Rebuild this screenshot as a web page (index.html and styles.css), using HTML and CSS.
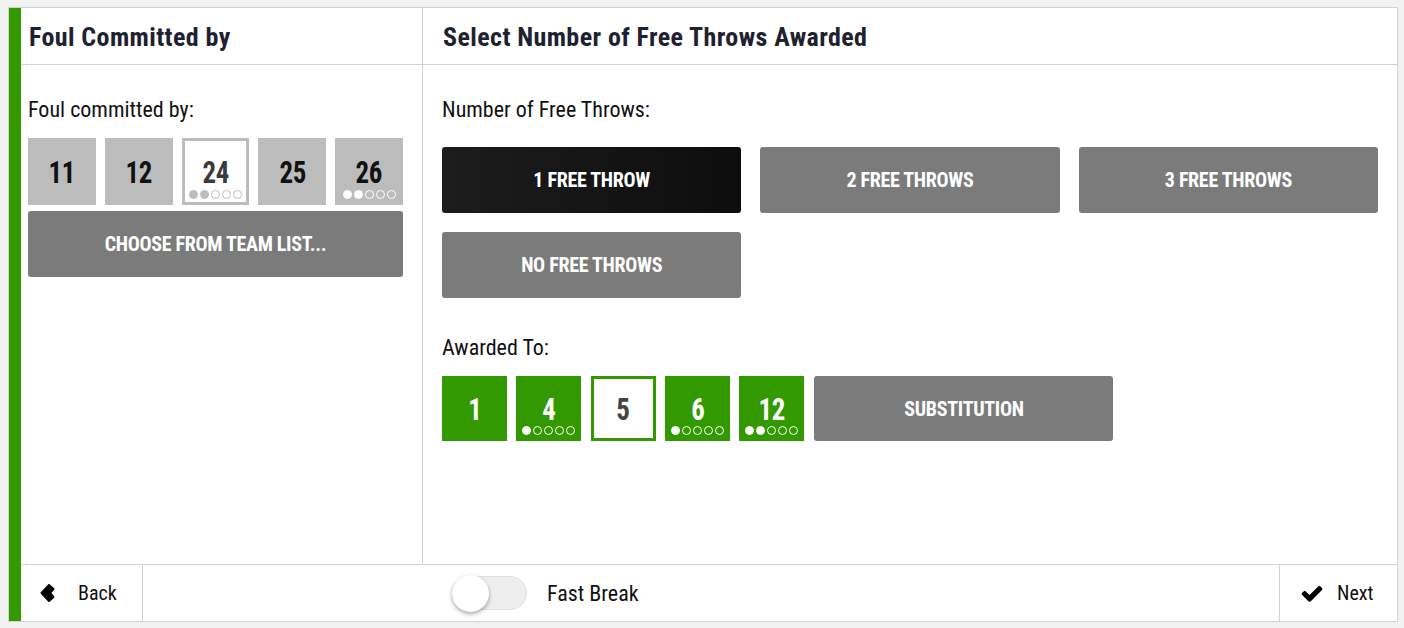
FILE: index.html
```html
<!DOCTYPE html>
<html lang="en">
<head>
    <meta charset="UTF-8">
    <title>Foul - Free Throws</title>
    <link rel="stylesheet" href="styles.css">
</head>
<body>
    <div class="frame">
        <div class="accent"></div>
        <div class="main">
            <div class="panels">
                <!-- left column -->
                <div class="panel panel-left">
                    <div class="panel-head">Foul Committed by</div>
                    <div class="panel-body">
                        <div class="label">Foul committed by:</div>
                        <div class="tiles">
                            <div class="tile"><span class="num">11</span></div>
                            <div class="tile"><span class="num">12</span></div>
                            <div class="tile selected"><span class="num">24</span>
                                <div class="dots"><i class="on"></i><i class="on"></i><i></i><i></i><i></i></div>
                            </div>
                            <div class="tile"><span class="num">25</span></div>
                            <div class="tile"><span class="num">26</span>
                                <div class="dots"><i class="on"></i><i class="on"></i><i></i><i></i><i></i></div>
                            </div>
                        </div>
                        <div class="btn btn-wide">CHOOSE FROM TEAM LIST...</div>
                    </div>
                </div>

                <!-- right column -->
                <div class="panel panel-right">
                    <div class="panel-head">Select Number of Free Throws Awarded</div>
                    <div class="panel-body">
                        <div class="label">Number of Free Throws:</div>
                        <div class="throws">
                            <div class="btn active">1 FREE THROW</div>
                            <div class="btn">2 FREE THROWS</div>
                            <div class="btn">3 FREE THROWS</div>
                            <div class="btn">NO FREE THROWS</div>
                        </div>
                        <div class="label label-award">Awarded To:</div>
                        <div class="awarded">
                            <div class="tile green"><span class="num">1</span></div>
                            <div class="tile green"><span class="num">4</span>
                                <div class="dots"><i class="on"></i><i></i><i></i><i></i><i></i></div>
                            </div>
                            <div class="tile green selected"><span class="num">5</span></div>
                            <div class="tile green"><span class="num">6</span>
                                <div class="dots"><i class="on"></i><i></i><i></i><i></i><i></i></div>
                            </div>
                            <div class="tile green"><span class="num">12</span>
                                <div class="dots"><i class="on"></i><i class="on"></i><i></i><i></i><i></i></div>
                            </div>
                            <div class="btn btn-sub">SUBSTITUTION</div>
                        </div>
                    </div>
                </div>
            </div>

            <div class="footer">
                <div class="foot-btn back">
                    <svg width="16" height="20" viewBox="0 0 16 20"><polygon points="1.5,10 9,2 13.5,6 10,10 13.5,14 9,18" fill="#000" stroke="#000" stroke-width="2" stroke-linejoin="round"/></svg>
                    <span>Back</span>
                </div>
                <div class="foot-mid">
                    <div class="toggle"><div class="knob"></div></div>
                    <span>Fast Break</span>
                </div>
                <div class="foot-btn next">
                    <svg width="24" height="19" viewBox="0 200 1792 1400"><path d="M1671 566q0 40-28 68l-724 724-136 136q-28 28-68 28t-68-28l-136-136-362-362q-28-28-28-68t28-68l136-136q28-28 68-28t68 28l294 295 656-657q28-28 68-28t68 28l136 136q28 28 28 68z" fill="#000"/></svg>
                    <span>Next</span>
                </div>
            </div>
        </div>
    </div>
</body>
</html>
```

FILE: styles.css
```css
body {
    margin: 0;
    padding: 7px 6px 6px 8px;
    background: #f2f2f2;
    font-family: "Roboto Condensed", "DejaVu Sans Condensed", Roboto, sans-serif;
    color: #111;
}
.frame {
    display: flex;
    height: 613px;
    border: 1px solid #d2d2d2;
    background: #fff;
}
.accent {
    width: 12px;
    background: #339900;
}
.main {
    flex: 1;
    display: flex;
    flex-direction: column;
}
.panels {
    flex: 1;
    display: flex;
}
.panel-left {
    width: 401px;
    border-right: 1px solid #d2d2d2;
}
.panel-right {
    flex: 1;
}
.panel-head {
    height: 54px;
    padding-top: 2px;
    line-height: 54px;
    border-bottom: 1px solid #d2d2d2;
    font-size: 26px;
    letter-spacing: 0.4px;
    font-weight: bold;
    color: #1e2230;
    padding-left: 8px;
}
.panel-right .panel-head {
    padding-left: 20px;
}
.panel-body {
    padding: 33px 19px 0 7px;
}
.panel-right .panel-body {
    padding-left: 19px;
}
.label {
    font-size: 22px;
    line-height: 24px;
    margin-bottom: 16px;
}
.panel-right .label {
    margin-bottom: 25px;
}
.panel-right .label-award {
    margin-top: 38px;
    margin-bottom: 16px;
}
.tiles {
    display: grid;
    grid-template-columns: repeat(5, 1fr);
    gap: 9px;
    margin-bottom: 6px;
}
.tile {
    position: relative;
    height: 67px;
    background: #bcbcbc;
    display: flex;
    align-items: center;
    justify-content: center;
    font-size: 32px;
    font-weight: bold;
    color: #111;
    box-sizing: border-box;
}
.num {
    display: inline-block;
    transform: scaleX(0.84);
    letter-spacing: -0.5px;
}
.tile.selected {
    background: #fff;
    border: 3px solid #bcbcbc;
    color: #3a3a3a;
}
.dots {
    position: absolute;
    left: 0;
    right: 0;
    bottom: 6px;
    display: flex;
    justify-content: center;
    gap: 2px;
}
.selected .dots {
    bottom: 3px;
}
.dots i {
    width: 7px;
    height: 7px;
    border-radius: 50%;
    border: 1px solid #fff;
}
.dots i.on {
    background: #fff;
}
.selected .dots i {
    border-color: #bcbcbc;
}
.selected .dots i.on {
    background: #bcbcbc;
}
.btn {
    height: 66px;
    border-radius: 3px;
    background: #7b7b7b;
    color: #fff;
    font-size: 20px;
    font-weight: bold;
    letter-spacing: -0.3px;
    display: flex;
    align-items: center;
    justify-content: center;
}
.btn.active {
    background: linear-gradient(to right, #1d1d1d, #0d0d0d);
}
.throws {
    display: grid;
    grid-template-columns: repeat(3, 1fr);
    gap: 19px;
}
.awarded {
    display: flex;
    gap: 9.3px;
}
.awarded .tile {
    flex: none;
    width: 65px;
    height: 65px;
}
.tile.green {
    background: #339900;
    color: #fff;
}
.tile.green.selected {
    background: #fff;
    border-color: #339900;
    color: #444;
}
.btn-sub {
    width: 299px;
    height: 65px;
    margin-left: 1px;
}
.footer {
    height: 56px;
    border-top: 1px solid #d2d2d2;
    display: flex;
    align-items: center;
    font-size: 20px;
}
.foot-btn {
    height: 100%;
    display: flex;
    align-items: center;
}
.back {
    width: 122px;
    border-right: 1px solid #d2d2d2;
    padding-left: 19px;
    box-sizing: border-box;
    gap: 22px;
}
.next {
    width: 118px;
    border-left: 1px solid #d2d2d2;
    padding-left: 20px;
    box-sizing: border-box;
    gap: 13px;
}
.foot-mid {
    flex: 1;
    display: flex;
    align-items: center;
    padding-left: 309px;
    gap: 20px;
    font-size: 22px;
}
.toggle {
    position: relative;
    width: 75px;
    height: 34px;
    border-radius: 17px;
    background: #eeeeee;
    border: 1px solid #e0e0e0;
    box-sizing: border-box;
}
.knob {
    position: absolute;
    left: -1px;
    top: -2px;
    width: 37px;
    height: 37px;
    border-radius: 50%;
    background: #fff;
    box-shadow: 0 2px 4px rgba(0, 0, 0, 0.35);
}
```
